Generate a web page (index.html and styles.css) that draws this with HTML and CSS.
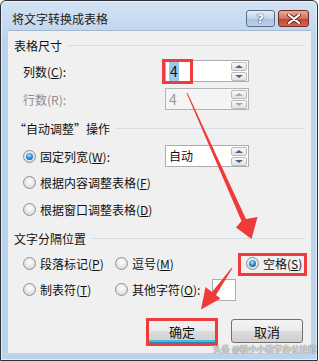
FILE: index.html
```html
<!DOCTYPE html>
<html lang="zh-CN">
  <head>
    <meta charset="UTF-8" />
    <title>将文字转换成表格</title>
    <link rel="stylesheet" href="styles.css">
  </head>
  <body>
    <div class="window">
      <!-- Title bar -->
      <div class="titlebar">
        <span class="title">将文字转换成表格</span>
        <span class="capBtn helpBtn">?</span>
        <span class="capBtn closeBtn">
          <svg width="14" height="10" viewBox="0 0 14 10">
            <path d="M2 1 L12 9 M12 1 L2 9" stroke="#6b2a22" stroke-width="4" stroke-linecap="round" />
            <path d="M2 1 L12 9 M12 1 L2 9" stroke="#fff" stroke-width="2.2" stroke-linecap="round" />
          </svg>
        </span>
      </div>

      <div class="client">
        <!-- Table size -->
        <div class="legend"><span>表格尺寸</span></div>
        <div class="fieldRow">
          <span class="label">列数(<u>C</u>):</span>
          <div class="spinner">
            <span class="value"><span class="sel">4</span></span>
            <div class="spinBtns"><i class="up"></i><i class="down"></i></div>
          </div>
        </div>
        <div class="fieldRow disabled">
          <span class="label">行数(R):</span>
          <div class="spinner">
            <span class="value">4</span>
            <div class="spinBtns"><i class="up"></i><i class="down"></i></div>
          </div>
        </div>

        <!-- Autofit -->
        <div class="legend second"><span>“自动调整”操作</span></div>
        <div class="radioRow first">
          <span class="opt"><span class="radio checked"></span>固定列宽(<u>W</u>):</span>
          <div class="spinner">
            <span class="value">自动</span>
            <div class="spinBtns"><i class="up"></i><i class="down"></i></div>
          </div>
        </div>
        <div class="radioRow mid">
          <span class="opt"><span class="radio"></span>根据内容调整表格(<u>F</u>)</span>
        </div>
        <div class="radioRow">
          <span class="opt"><span class="radio"></span>根据窗口调整表格(<u>D</u>)</span>
        </div>

        <!-- Separator -->
        <div class="legend third"><span>文字分隔位置</span></div>
        <div class="sepRow top">
          <span class="opt"><span class="radio"></span>段落标记(<u>P</u>)</span>
          <span class="opt"><span class="radio"></span>逗号(<u>M</u>)</span>
          <span class="opt"><span class="radio checked"></span>空格(<u>S</u>)</span>
        </div>
        <div class="sepRow">
          <span class="opt"><span class="radio"></span>制表符(<u>T</u>)</span>
          <span class="opt"><span class="radio"></span>其他字符(<u>O</u>):<span class="otherInput">-</span></span>
        </div>

        <!-- Buttons -->
        <div class="buttons">
          <span class="btn default">确定</span>
          <span class="btn">取消</span>
        </div>
      </div>
    </div>

    <!-- Annotations -->
    <svg class="marks" width="319" height="361" viewBox="0 0 319 361">
      <g fill="none" stroke="#f23a3a" stroke-width="3">
        <rect x="163.5" y="60.5" width="28" height="22" />
        <rect x="239.5" y="254.5" width="66" height="20" />
        <rect x="147.5" y="319.5" width="69" height="25" />
      </g>
      <g fill="#ef3a3a">
        <polygon points="186.6,93.2 187.4,92.8 246,219 257.5,217 251.5,239 236,227.5 241.5,221" />
        <polygon points="231.6,267.7 232.4,268.3 216,295 220.5,298.5 201,309.5 205.5,287 212,292" />
      </g>
    </svg>
    <div class="watermark">头条 @粮小小教学办公技能</div>
  </body>
</html>
```

FILE: styles.css
```css
body {
  margin: 0;
  position: relative;
  width: 319px;
  height: 361px;
  background-color: #fff;
  font-family: "Noto Sans CJK SC", "Noto Sans", sans-serif;
  font-size: 12px;
  color: #111;
}
.window {
  box-sizing: border-box;
  width: 318px;
  height: 361px;
  border: 1px solid #2c3036;
  border-radius: 6px 6px 0 0;
  padding: 0 6px 7px 7px;
  background: linear-gradient(#d3e3f4, #bcd3ec 40px, #bcd3ec);
  box-shadow: inset 0 0 0 1px rgba(255, 255, 255, 0.6);
}
.titlebar {
  height: 29px;
  display: flex;
  align-items: flex-start;
  padding: 0 2px 0 4px;
}
.title {
  line-height: 16px;
  margin-top: 10px;
  flex: 1;
  color: #1a1a1a;
}
.capBtn {
  box-sizing: border-box;
  height: 17px;
  margin-top: 9px;
  border: 1px solid #5d6f86;
  border-radius: 3px;
  display: flex;
  align-items: center;
  justify-content: center;
}
.helpBtn {
  width: 29px;
  margin-right: 3px;
  background: linear-gradient(#e3edf8, #c3d5ea 50%, #a9c1de 51%, #bdd3ec);
  color: #fff;
  font-family: "DejaVu Sans", sans-serif;
  font-weight: bold;
  font-size: 13px;
  text-shadow: 0 0 1px #3b4f6b, 0 0 1px #3b4f6b, 0 0 1px #3b4f6b;
}
.closeBtn {
  width: 31px;
  border-color: #6e2c25;
  background: linear-gradient(#e9a99c, #d2705f 50%, #c0452f 51%, #d0664d);
}
.client {
  box-sizing: border-box;
  height: 323px;
  background-color: #f0f0f0;
  border-top: 1px solid #a6b8cd;
  padding: 0 6px;
}
.legend {
  display: flex;
  align-items: center;
  height: 16px;
  margin-top: 6px;
}
.legend::after {
  content: "";
  flex: 1;
  margin-left: 5px;
  border-top: 1px solid #d5dfe5;
}
.legend.second {
  margin-top: 7px;
}
.legend.third {
  margin-top: 8px;
}
.fieldRow {
  display: flex;
  align-items: center;
  height: 28px;
  padding-left: 9px;
}
.fieldRow:first-of-type {
  margin-top: 4px;
}
.legend + .fieldRow {
  margin-top: 4px;
}
.label {
  width: 142px;
}
.disabled .label {
  color: #8d8d8d;
}
.spinner {
  box-sizing: border-box;
  width: 84px;
  height: 22px;
  border: 1px solid #abadb3;
  background-color: #fff;
  display: flex;
  align-items: center;
  padding: 1px;
}
.value {
  flex: 1;
  padding-left: 2px;
  line-height: 18px;
}
.sel {
  background-color: #99c9ef;
  padding: 0 1px;
  font-size: 14px;
}
.disabled .spinner {
  border-color: #b4b4b4;
  background-color: #f4f4f4;
  color: #9a9a9a;
}
.disabled .value {
  font-size: 14px;
}
.spinBtns {
  width: 16px;
  display: flex;
  flex-direction: column;
  gap: 1px;
}
.spinBtns i {
  box-sizing: border-box;
  height: 9px;
  border: 1px solid #bcbcbc;
  border-radius: 2px;
  background: linear-gradient(#f8f8f8, #e2e2e2);
  display: flex;
  align-items: center;
  justify-content: center;
}
.spinBtns i::after {
  content: "";
  border-left: 4px solid transparent;
  border-right: 4px solid transparent;
}
.spinBtns .up::after {
  border-bottom: 3px solid #4c5f8c;
}
.spinBtns .down::after {
  border-top: 3px solid #4c5f8c;
}
.disabled .spinBtns .up::after {
  border-bottom-color: #a8a8a8;
}
.disabled .spinBtns .down::after {
  border-top-color: #a8a8a8;
}
.radioRow {
  display: flex;
  align-items: center;
  height: 26px;
  padding-left: 9px;
}
.radioRow.first {
  margin-top: 7px;
}
.radioRow.first .opt {
  width: 142px;
}
.radioRow.mid {
  height: 27px;
}
.opt {
  display: flex;
  align-items: center;
}
.radio {
  box-sizing: border-box;
  width: 13px;
  height: 13px;
  border: 1px solid #8f9192;
  border-radius: 50%;
  background: radial-gradient(circle at 50% 40%, #ffffff, #e6e6e6 55%, #c9c9c9);
  margin-right: 4px;
  display: flex;
  align-items: center;
  justify-content: center;
}
.radio.checked::after {
  content: "";
  width: 7px;
  height: 7px;
  border-radius: 50%;
  background: radial-gradient(circle at 45% 35%, #b5ecff, #2f8ed4 45%, #104f8c);
}
.sepRow {
  display: grid;
  grid-template-columns: 92px 131px auto;
  align-items: center;
  height: 26px;
  padding-left: 9px;
}
.sepRow.top {
  margin-top: 4px;
}
.sepRow:not(.top) {
  height: 27px;
}
.otherInput {
  box-sizing: border-box;
  width: 24px;
  height: 22px;
  margin-left: 12px;
  border: 1px solid #abadb3;
  background-color: #fff;
  color: #3a8ad0;
  font-size: 9px;
  line-height: 18px;
  padding-left: 3px;
}
.buttons {
  display: flex;
  justify-content: flex-end;
  gap: 13px;
  margin-top: 16px;
  padding-right: 2px;
}
.btn {
  box-sizing: border-box;
  width: 72px;
  height: 24px;
  border: 1px solid #707070;
  border-radius: 3px;
  background: linear-gradient(#f4f4f4, #ebebeb 50%, #dddddd 51%, #cfcfcf);
  display: flex;
  align-items: center;
  justify-content: center;
  font-size: 13px;
}
.btn.default {
  border-color: #3c7fb1;
  box-shadow: inset 0 -2px 0 #38c2ea;
}
.marks {
  position: absolute;
  top: 0;
  left: 0;
  pointer-events: none;
}
.watermark {
  position: absolute;
  left: 213px;
  top: 343px;
  font-size: 8.5px;
  line-height: 10px;
  color: #f4f4f4;
  text-shadow: 0 0 1px #555, 0 0 1px #555;
  white-space: nowrap;
}
```
